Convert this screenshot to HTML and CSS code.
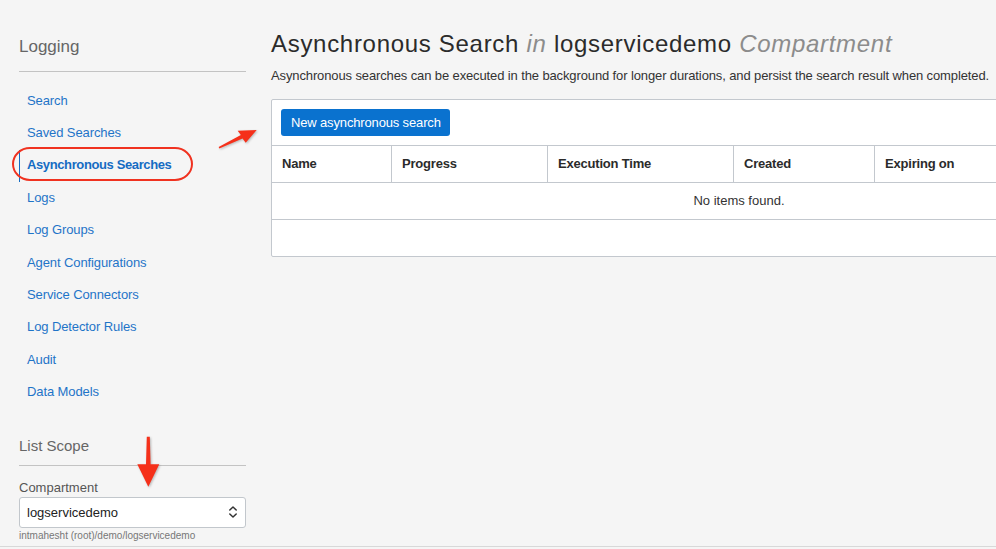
FILE: index.html
```html
<!DOCTYPE html>
<html lang="en">
<head>
<meta charset="utf-8">
<title>Asynchronous Search</title>
<link rel="stylesheet" href="styles.css">
</head>
<body>
<div class="page">
  <aside class="sidebar">
    <h2 class="side-title">Logging</h2>
    <nav class="side-nav">
      <a class="nav-item">Search</a>
      <a class="nav-item">Saved Searches</a>
      <a class="nav-item active">Asynchronous Searches</a>
      <a class="nav-item">Logs</a>
      <a class="nav-item">Log Groups</a>
      <a class="nav-item">Agent Configurations</a>
      <a class="nav-item">Service Connectors</a>
      <a class="nav-item">Log Detector Rules</a>
      <a class="nav-item">Audit</a>
      <a class="nav-item">Data Models</a>
    </nav>
    <h3 class="scope-title">List Scope</h3>
    <div class="field-label">Compartment</div>
    <div class="select">
      <span>logservicedemo</span>
      <svg class="chev" width="10" height="14" viewBox="0 0 10 14"><path d="M1.8 5 L5 2 L8.2 5 M1.8 9 L5 12 L8.2 9" fill="none" stroke="#333" stroke-width="1.5" stroke-linecap="round" stroke-linejoin="round"/></svg>
    </div>
    <div class="hint">intmahesht (root)/demo/logservicedemo</div>
  </aside>
  <main class="main">
    <h1 class="title">Asynchronous Search <em>in</em> logservicedemo <em>Compartment</em></h1>
    <p class="desc">Asynchronous searches can be executed in the background for longer durations, and persist the search result when completed.</p>
    <section class="card">
      <div class="toolbar"><button class="btn">New asynchronous search</button></div>
      <div class="thead">
        <div class="th">Name</div>
        <div class="th">Progress</div>
        <div class="th">Execution Time</div>
        <div class="th">Created</div>
        <div class="th">Expiring on</div>
      </div>
      <div class="empty">No items found.</div>
      <div class="tfoot"></div>
    </section>
  </main>
</div>
<div class="annot-ring"></div>
<svg class="annot-arrow a1" width="56" height="40" viewBox="0 0 56 40"><polygon points="8.66,26.98 30.85,14.9 27.7,10.7 46.7,10 35.7,22.7 32.55,18.5 9.34,28.42" fill="#f5301a"/></svg>
<svg class="annot-arrow a2" width="40" height="62" viewBox="0 0 40 62"><polygon points="16.8,6.7 19.8,6.7 20.6,34.3 29.3,34.3 18.3,56.7 7.3,34.3 16,34.3" fill="#f5301a"/></svg>
</body>
</html>
```
FILE: styles.css
```css
* { box-sizing: border-box; }
html, body { margin: 0; padding: 0; }
body {
  background: #f5f5f5;
  font-family: "Liberation Sans", Arial, sans-serif;
  color: #333;
  width: 996px;
  height: 549px;
  overflow: hidden;
  position: relative;
}
.page {
  display: flex;
  height: 547px;
  border-bottom: 1px solid #d8d8d8;
}
.sidebar {
  width: 246px;
  flex: none;
  padding: 37px 0 0 19px;
  display: flex;
  flex-direction: column;
}
.side-title {
  margin: 0;
  font-size: 17px;
  line-height: 20px;
  font-weight: normal;
  color: #666;
  padding-bottom: 14px;
  border-bottom: 1px solid #c3c3c3;
}
.side-nav {
  display: flex;
  flex-direction: column;
  margin-top: 13px;
}
.nav-item {
  display: block;
  font-size: 13px;
  line-height: 32.33px;
  height: 32.33px;
  color: #1f74c8;
  padding-left: 8px;
  text-decoration: none;
  letter-spacing: -0.1px;
}
.nav-item.active {
  font-weight: bold;
  color: #156cc3;
  border-left: 1px solid #156cc3;
  padding-left: 7px;
  line-height: 30px;
  letter-spacing: -0.38px;
}
.scope-title {
  margin: 29px 0 0;
  font-size: 15px;
  line-height: 18px;
  font-weight: normal;
  color: #666;
  padding-bottom: 10px;
  border-bottom: 1px solid #c3c3c3;
}
.field-label {
  margin-top: 14px;
  font-size: 13px;
  line-height: 16px;
  color: #555;
}
.select {
  margin-top: 1px;
  height: 31px;
  background: #fff;
  border: 1px solid #c2c7cc;
  border-radius: 3px;
  display: flex;
  align-items: center;
  justify-content: space-between;
  padding: 0 7px 1px 7px;
  font-size: 13px;
  color: #222;
}
.chev { display: block; }
.hint {
  margin-top: 2px;
  font-size: 10px;
  line-height: 12px;
  color: #777;
}
.main {
  margin-left: 25px;
  padding-top: 30px;
  flex: none;
  width: 936px;
}
.title {
  margin: 0;
  font-size: 24px;
  line-height: 28px;
  font-weight: normal;
  color: #2b2b2b;
  white-space: nowrap;
  letter-spacing: 0.7px;
}
.title em { color: #8c8c8c; }
.desc {
  margin: 10px 0 0;
  font-size: 13px;
  line-height: 16px;
  color: #333;
  white-space: nowrap;
  letter-spacing: -0.12px;
}
.card {
  margin-top: 15px;
  width: 936px;
  background: #fff;
  border: 1px solid #c3c8ce;
  border-radius: 2px;
}
.toolbar {
  padding: 9px 9px 9px;
  border-bottom: 1px solid #c3c8ce;
}
.btn {
  display: block;
  height: 27px;
  padding: 0 9px 0 10px;
  background: #0a72cf;
  border: none;
  border-radius: 3px;
  color: #fff;
  font-family: "Liberation Sans", Arial, sans-serif;
  font-size: 13px;
  letter-spacing: -0.15px;
}
.thead {
  display: grid;
  grid-template-columns: 120px 156px 186px 141px 1fr;
  height: 37px;
  border-bottom: 1px solid #c3c8ce;
}
.th {
  font-size: 13px;
  font-weight: bold;
  color: #2b2b2b;
  padding-left: 10px;
  padding-bottom: 2px;
  display: flex;
  align-items: center;
  border-right: 1px solid #c3c8ce;
  letter-spacing: -0.2px;
}
.th:last-child { border-right: none; }
.empty {
  height: 37px;
  display: flex;
  align-items: center;
  justify-content: center;
  font-size: 13px;
  color: #333;
  padding-bottom: 2px;
  border-bottom: 1px solid #c3c8ce;
}
.tfoot { height: 36px; }
.annot-ring {
  position: absolute;
  left: 12px;
  top: 147px;
  width: 181px;
  height: 34px;
  border: 2px solid #f03220;
  border-radius: 18px / 17px;
}
.annot-arrow {
  position: absolute;
  filter: drop-shadow(1px 1.5px 1px rgba(0,0,0,0.25));
}
.a1 { left: 210px; top: 120px; }
.a2 { left: 130px; top: 430px; }
```
